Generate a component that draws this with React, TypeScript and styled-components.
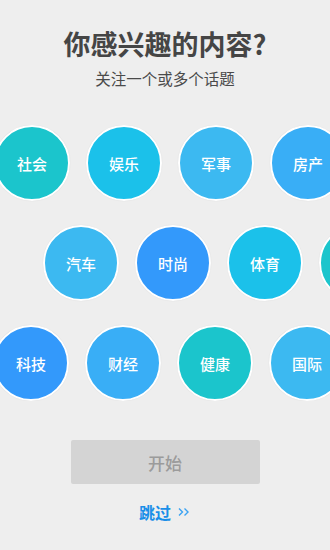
import React from 'react'
import styled, { createGlobalStyle } from 'styled-components'

const GlobalStyle = createGlobalStyle`
  html, body {
    margin: 0;
    padding: 0;
    background: #eeeeee;
  }
  body {
    font-family: 'Noto Sans CJK SC', 'Noto Sans', sans-serif;
  }
`

type Topic = { name: string; color: string }

const TEAL = '#1bc5cc'
const CYAN = '#1bc1ea'
const SKY = '#3cb9f1'
const AZURE = '#39aef6'
const BLUE = '#3399fb'

const rows: { offset: number; topics: Topic[] }[] = [
  {
    offset: -6,
    topics: [
      { name: '社会', color: TEAL },
      { name: '娱乐', color: CYAN },
      { name: '军事', color: SKY },
      { name: '房产', color: AZURE },
    ],
  },
  {
    offset: 43,
    topics: [
      { name: '汽车', color: SKY },
      { name: '时尚', color: BLUE },
      { name: '体育', color: CYAN },
      { name: '', color: TEAL },
    ],
  },
  {
    offset: -7,
    topics: [
      { name: '科技', color: BLUE },
      { name: '财经', color: AZURE },
      { name: '健康', color: TEAL },
      { name: '国际', color: SKY },
    ],
  },
]

export default function App(): JSX.Element {
  const [selected, setSelected] = React.useState<string[]>([])

  const toggle = (name: string) => {
    if (!name) return
    setSelected(prev => (prev.includes(name) ? prev.filter(n => n !== name) : [...prev, name]))
  }

  return (
    <Page>
      <GlobalStyle />
      <Title>你感兴趣的内容?</Title>
      <Subtitle>关注一个或多个话题</Subtitle>
      <Bubbles>
        {rows.map((row, index) => (
          <BubbleRow $offset={row.offset} key={`row-${index}`}>
            {row.topics.map((topic, i) => (
              <Bubble
                key={`${index}-${i}`}
                $color={topic.color}
                $active={selected.includes(topic.name)}
                onClick={() => toggle(topic.name)}
              >
                {topic.name}
              </Bubble>
            ))}
          </BubbleRow>
        ))}
      </Bubbles>
      <StartButton disabled={selected.length === 0}>开始</StartButton>
      <SkipLink>
        跳过
        <svg width='14' height='12' viewBox='0 0 14 12'>
          <path d='M2 2.5 L5.5 6 L2 9.5 M7.5 2.5 L11 6 L7.5 9.5' fill='none' stroke='#3aa2f2' strokeWidth='1.4' />
        </svg>
      </SkipLink>
    </Page>
  )
}

const Page = styled.div`
  width: 330px;
  height: 550px;
  overflow: hidden;
  display: flex;
  flex-direction: column;
  align-items: center;
`
const Title = styled.h1`
  margin: 25px 0 0;
  font-size: 27px;
  line-height: 38px;
  font-weight: 700;
  color: #454545;
`
const Subtitle = styled.p`
  margin: 4px 0 0;
  font-size: 15.5px;
  line-height: 22px;
  color: #4a4a4a;
`
const Bubbles = styled.div`
  align-self: stretch;
  margin-top: 36px;
  display: flex;
  flex-direction: column;
  gap: 24px;
  overflow: hidden;
`
const BubbleRow = styled.div<{ $offset: number }>`
  display: flex;
  gap: 16px;
  margin-left: ${p => p.$offset}px;
`
const Bubble = styled.div<{ $color: string; $active: boolean }>`
  flex: none;
  box-sizing: border-box;
  width: 76px;
  height: 76px;
  border-radius: 50%;
  border: 2px solid #ffffff;
  background: ${p => p.$color};
  box-shadow: 0 0 1px rgba(0, 0, 0, 0.15);
  display: flex;
  align-items: center;
  justify-content: center;
  color: #ffffff;
  font-size: 15px;
  font-weight: 500;
  cursor: pointer;
  opacity: ${p => (p.$active ? 0.8 : 1)};
`
const StartButton = styled.button`
  margin-top: 39px;
  width: 189px;
  height: 44px;
  border: none;
  border-radius: 2px;
  background: #d4d4d4;
  color: #9b9b9b;
  font-family: inherit;
  font-size: 17px;
  font-weight: 500;
`
const SkipLink = styled.a`
  margin-top: 16px;
  display: flex;
  align-items: center;
  gap: 6px;
  color: #1a8fe8;
  font-size: 16px;
  font-weight: 700;
  cursor: pointer;
`
